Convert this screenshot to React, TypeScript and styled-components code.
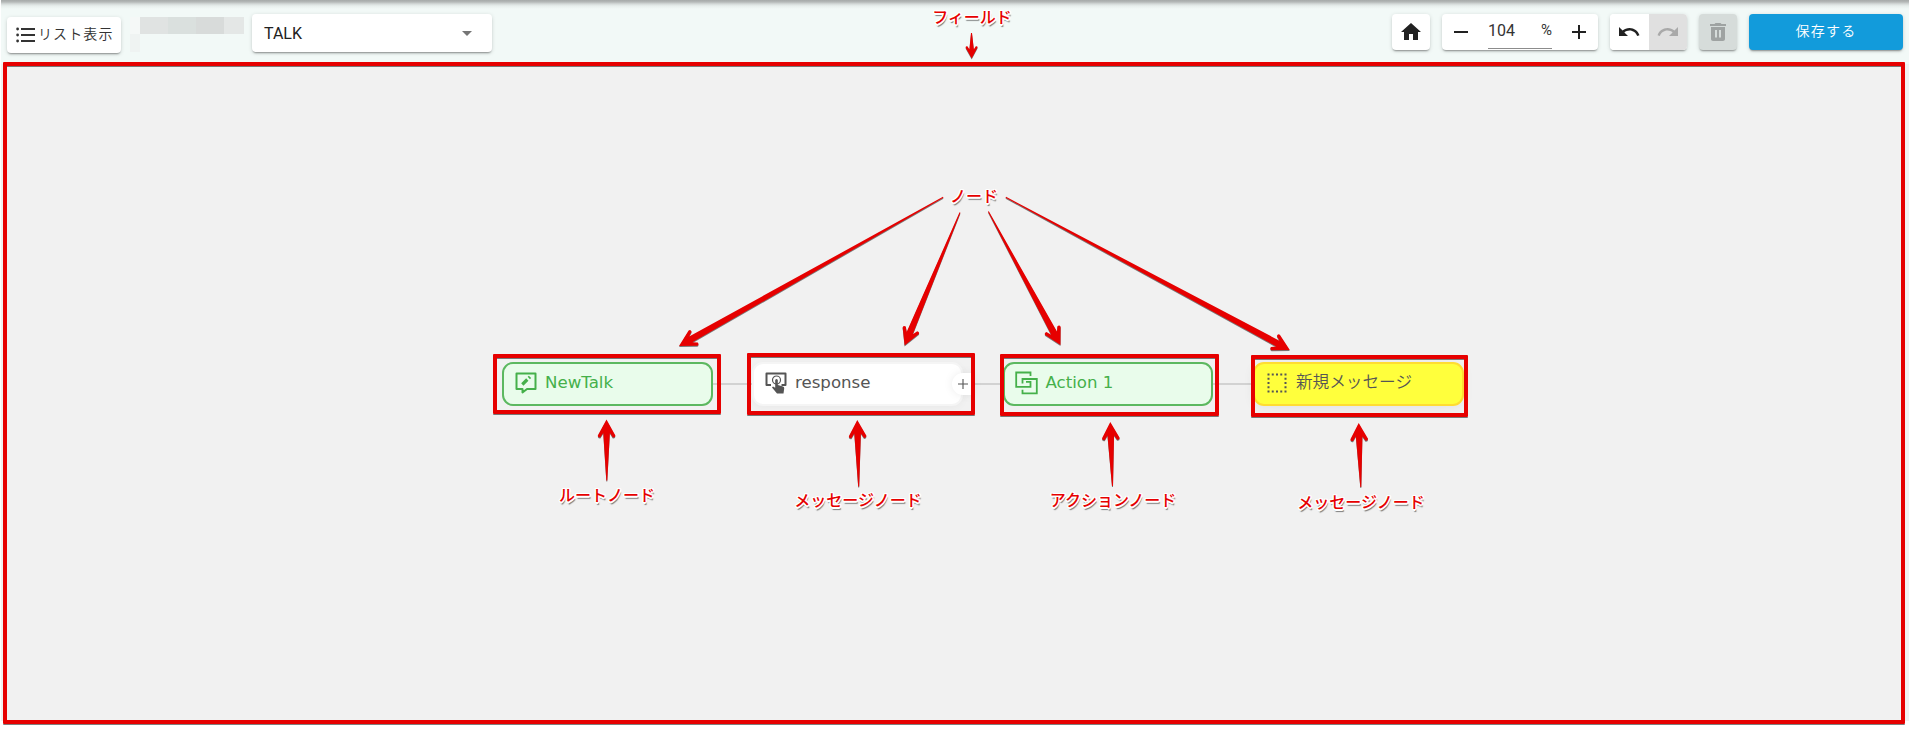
import React from "react";
import styled, { createGlobalStyle, css } from "styled-components";

const Global = createGlobalStyle`
  body { margin: 0; background: #fff; }
  * { box-sizing: border-box; }
`;

const Page = styled.div`
  position: relative;
  width: 1910px;
  height: 729px;
  padding: 0 1px;
  overflow: hidden;
  background: #fff;
  font-family: Roboto, "Noto Sans CJK JP", sans-serif;
  color: #212121;
`;

const Toolbar = styled.header`
  display: flex;
  align-items: flex-start;
  height: 64px;
  padding: 14px 6px 0;
  background: linear-gradient(#a6aaa9 0, #b5b9b8 2px, #d5dad9 4px, #e8efed 6px, #f2f9f7 9px);
`;

const raised = css`
  border-radius: 4px;
  box-shadow: 0 2px 2px -1px rgba(0, 0, 0, 0.38), 0 1px 4px rgba(0, 0, 0, 0.14);
`;

const ListButton = styled.button`
  ${raised}
  display: flex;
  align-items: center;
  width: 114px;
  height: 36px;
  margin: 3px 9px 0 0;
  padding: 0 0 0 9px;
  border: 0;
  background: #fff;
  color: #333;
  font: 350 14px Roboto, "Noto Sans CJK JP", sans-serif;
  letter-spacing: 1.1px;
  white-space: nowrap;
`;

const ListLabel = styled.span`
  margin: -5px 0 0 3px;
`;

const Mask = styled.div`
  display: grid;
  grid-template-columns: 10px 28px 28px 28px 20px;
  grid-template-rows: 17px 18px;
  margin: 3px 8px 0 0;
`;

const MaskCell = styled.i<{ $tone: string }>`
  background: ${(p) => p.$tone};
`;

const Select = styled.div`
  ${raised}
  display: flex;
  align-items: center;
  justify-content: space-between;
  width: 240px;
  height: 38px;
  padding: 0 20px 0 12px;
  background: #fff;
  font-size: 16px;
`;

const Caret = styled.span`
  border: 5px solid transparent;
  border-top-color: #757575;
  border-bottom: 0;
`;

const Actions = styled.div`
  display: flex;
  gap: 12px;
  margin-left: auto;
`;

const Group = styled.div<{ $width: number; $disabled?: boolean }>`
  ${raised}
  display: flex;
  align-items: center;
  justify-content: center;
  width: ${(p) => p.$width}px;
  height: 36px;
  overflow: hidden;
  background: ${(p) => (p.$disabled ? "#d6dcda" : "#fff")};
  color: ${(p) => (p.$disabled ? "#9fa3a2" : "#212121")};
`;

const HistoryButton = styled.span<{ $disabled?: boolean }>`
  display: flex;
  flex: 1;
  align-items: center;
  justify-content: center;
  height: 100%;
  background: ${(p) => (p.$disabled ? "#e0e0e0" : "#fff")};
  color: ${(p) => (p.$disabled ? "#a9a9a9" : "#212121")};
`;

const ZoomField = styled.div`
  display: flex;
  justify-content: space-between;
  width: 64px;
  height: 34px;
  margin: 0 15px;
  padding-top: 6px;
  border-bottom: 1px solid #8c8c8c;
  font-size: 16px;
  line-height: 19px;
  color: #333;
`;

const Unit = styled.span`
  font-size: 15px;
`;

const SaveButton = styled.button`
  ${raised}
  width: 154px;
  height: 36px;
  padding: 0 0 5px;
  border: 0;
  background: #129bdb;
  color: #fff;
  font: 350 14px Roboto, "Noto Sans CJK JP", sans-serif;
  letter-spacing: 1.2px;
`;

const Field = styled.main`
  height: 657px;
  background: #f1f1f1;
`;

const Overlay = styled.div`
  position: absolute;
  inset: 0;
`;

const Link = styled.div<{ $x: number; $w: number }>`
  position: absolute;
  left: ${(p) => p.$x}px;
  top: 383px;
  width: ${(p) => p.$w}px;
  height: 2px;
  background: #d2d2d2;
`;

type Tone = "green" | "white" | "yellow";
const tones = {
  green: css`
    background: #e9fceb;
    border-color: #5cb860;
    color: #45b04a;
  `,
  white: css`
    background: #fff;
    border-color: #f5f5f5;
    color: #555;
    box-shadow: 0 2px 8px rgba(0, 0, 0, 0.03);
  `,
  yellow: css`
    background: #ffff3c;
    border-color: #ffdc32;
    color: #555;
    box-shadow: 0 2px 12px rgba(0, 0, 0, 0.06);
  `,
};

const Node = styled.div<{ $x: number; $tone: Tone }>`
  position: absolute;
  left: ${(p) => p.$x}px;
  top: 362px;
  display: flex;
  align-items: center;
  gap: 7px;
  width: 210.5px;
  height: 43.5px;
  padding: 0 0 2px 10px;
  border: 2px solid;
  border-radius: 11px;
  font: 400 16.64px "DejaVu Sans", "Noto Sans CJK JP", sans-serif;
  white-space: nowrap;
  ${(p) => tones[p.$tone]}
`;

const NodeText = styled.span<{ $light?: boolean }>`
  margin-top: ${(p) => (p.$light ? -3 : -1)}px;
  font-weight: ${(p) => (p.$light ? 350 : 400)};
  ${(p) => p.$light && `font-family: "Noto Sans CJK JP", sans-serif;`}
`;

const AddHandle = styled.div`
  position: absolute;
  left: 952px;
  top: 373px;
  display: grid;
  place-items: center;
  width: 21px;
  height: 22px;
  border-radius: 11px 0 0 11px;
  background: #fff;
  box-shadow: 0 0 10px rgba(0, 0, 0, 0.08);
`;

const Frame = styled.div<{ $x: number; $y: number; $w: number; $h: number }>`
  position: absolute;
  left: ${(p) => p.$x}px;
  top: ${(p) => p.$y}px;
  width: ${(p) => p.$w}px;
  height: ${(p) => p.$h}px;
  border: 4px solid #e60000;
  border-radius: 1px;
  box-shadow: 0 1px 0 rgba(0, 0, 0, 0.5), inset 0 1px 0 rgba(0, 0, 0, 0.5);
`;

const Label = styled.div<{ $x: number; $y: number }>`
  position: absolute;
  left: ${(p) => p.$x}px;
  top: ${(p) => p.$y}px;
  transform: translate(-50%, -50%);
  font: 500 16px/24px "Noto Sans CJK JP", sans-serif;
  color: #e60000;
  white-space: nowrap;
  text-shadow: -1px -1px 0 #fff, 1px -1px 0 #fff, -1px 1px 0 #fff, 1px 1px 0 #fff,
    -1.5px 0 0 #fff, 1.5px 0 0 #fff, 0 1.5px 0 #fff, 0 -1.5px 0 #fff, 1px 2.5px 1px rgba(0, 0, 0, 0.5);
`;

const ArrowLayer = styled.svg`
  position: absolute;
  inset: 0;
  filter: drop-shadow(0 1px 0.5px rgba(0, 0, 0, 0.5));
`;

const Icon = ({ d, size = 24 }: { d: string; size?: number }) => (
  <svg width={size} height={size} viewBox="0 0 24 24" fill="currentColor">
    <path d={d} />
  </svg>
);

type ArrowProps = { from: [number, number]; to: [number, number]; k?: number };

/* Tapered shaft that widens from the tail up to a barbed head. */
const Arrow = ({ from, to, k = 1 }: ArrowProps) => {
  const length = Math.hypot(to[0] - from[0], to[1] - from[1]);
  const angle = (Math.atan2(to[1] - from[1], to[0] - from[0]) * 180) / Math.PI;
  const p = (x: number, y: number) => `${x * k} ${y * k}`;
  const d =
    `M0 0 L${p(-16, -8.8)} Q${p(-18.5, -8.8)} ${p(-18, -6.2)} L${p(-13.5, -3.3)} ` +
    `L${-length} -0.5 L${-length} 0.5 L${p(-13.5, 3.3)} L${p(-18, 6.2)} Q${p(-18.5, 8.8)} ${p(-16, 8.8)} Z`;
  return <path d={d} fill="#e60000" transform={`translate(${to[0]} ${to[1]}) rotate(${angle})`} />;
};

const arrows: ArrowProps[] = [
  { from: [971.5, 33], to: [971.7, 58.5], k: 0.68 },
  { from: [943.2, 197.3], to: [679, 346] },
  { from: [960, 212.5], to: [904.6, 345.5] },
  { from: [988.4, 211.5], to: [1060.5, 345] },
  { from: [1005.8, 197.3], to: [1289.8, 350] },
  { from: [606.8, 480.5], to: [606.5, 419.5] },
  { from: [858.7, 486.5], to: [857.3, 420] },
  { from: [1112.5, 486], to: [1110.3, 422] },
  { from: [1360.8, 487], to: [1358.7, 423] },
];

const frames = [
  [3, 62, 1902, 662],
  [493, 354, 228, 60],
  [747, 353, 228, 62],
  [1000, 354, 219, 62],
  [1251, 355, 217, 62],
];

const labels: [string, number, number][] = [
  ["フィールド", 972, 16],
  ["ノード", 974, 195],
  ["ルートノード", 607, 494],
  ["メッセージノード", 858, 499],
  ["アクションノード", 1113, 499],
  ["メッセージノード", 1361, 501],
];

const maskTones = ["#f5f8f7", "#e0e3e2", "#dae0de", "#d8dbda", "#e4e7e6", "#eff3f2"];

export default function App() {
  return (
    <Page>
      <Global />
      <Toolbar>
        <ListButton>
          <svg width="19" height="16" viewBox="0 0 19 16" fill="currentColor">
            <path d="M5 1h14v2H5zM5 7h14v2H5zM5 13h14v2H5z" />
            <circle cx="1.6" cy="2" r="1.4" />
            <circle cx="1.6" cy="8" r="1.4" />
            <circle cx="1.6" cy="14" r="1.4" />
          </svg>
          <ListLabel>リスト表示</ListLabel>
        </ListButton>
        <Mask>
          {maskTones.map((tone, i) => (
            <MaskCell key={i} $tone={tone} />
          ))}
        </Mask>
        <Select>
          TALK
          <Caret />
        </Select>
        <Actions>
          <Group $width={38}>
            <Icon d="M10 20v-6h4v6h5v-8h3L12 3 2 12h3v8z" />
          </Group>
          <Group $width={156}>
            <Icon d="M19 13H5v-2h14z" />
            <ZoomField>
              <span>104</span>
              <Unit>%</Unit>
            </ZoomField>
            <Icon d="M19 13h-6v6h-2v-6H5v-2h6V5h2v6h6z" />
          </Group>
          <Group $width={77}>
            <HistoryButton>
              <Icon d="M12.5 8c-2.65 0-5.05.99-6.9 2.6L2 7v9h9l-3.62-3.62c1.39-1.16 3.16-1.88 5.12-1.88 3.54 0 6.55 2.31 7.6 5.5l2.37-.78C21.08 11.03 17.15 8 12.5 8z" />
            </HistoryButton>
            <HistoryButton $disabled>
              <Icon d="M18.4 10.6C16.55 8.99 14.15 8 11.5 8c-4.65 0-8.58 3.03-9.96 7.22L3.9 16c1.05-3.19 4.05-5.5 7.6-5.5 1.95 0 3.73.72 5.12 1.88L13 16h9V7z" />
            </HistoryButton>
          </Group>
          <Group $width={38} $disabled>
            <svg width="24" height="24" viewBox="0 0 24 24" fill="currentColor">
              <path
                fillRule="evenodd"
                d="M5 7v12c0 1.100.9 2 2 2h10c1.100 0 2-.9 2-2V7zM9 10h2v7.500H9zM13 10h2v7.500h-2zM20 4h-4.500l-1-1h-5l-1 1H4v2h16z"
              />
            </svg>
          </Group>
          <SaveButton>保存する</SaveButton>
        </Actions>
      </Toolbar>
      <Field />
      <Overlay>
        <Link $x={712} $w={42} />
        <Link $x={962} $w={42} />
        <Link $x={1213} $w={42} />
        <Node $x={502} $tone="green">
          <svg width="24" height="24" viewBox="0 0 24 24" fill="none" stroke="currentColor" strokeWidth="2">
            <path d="M2.500 2.500h19v15.500h-8.500l-4.500 3.500v-3.500h-6z" strokeLinejoin="round" />
            <path d="M8.300 13.500l5-5M14.800 7l1.200-1.200" strokeWidth="3.200" />
          </svg>
          <NodeText>NewTalk</NodeText>
        </Node>
        <Node $x={752} $tone="white">
          <svg width="24" height="24" viewBox="0 0 24 24" fill="none" stroke="currentColor" strokeWidth="2">
            <path d="M7 14H2.500V2.500h19V14h-4" strokeLinejoin="round" />
            <circle cx="12.500" cy="9" r="4" strokeWidth="1.2" />
            <path d="M11.200 9q1.300-1.800 2.600 0v5l5.200 1.500q1.500.5 1.200 2L19.500 22.500h-6.500l-5-6 1-1 2.200 1.200z" fill="currentColor" stroke="none" />
          </svg>
          <NodeText>response</NodeText>
        </Node>
        <Node $x={1002.5} $tone="green">
          <svg width="24" height="24" viewBox="0 0 24 24" fill="none" stroke="currentColor" strokeWidth="1.8">
            <path d="M15.500 5V1.500H1.200v14.300h14.300v-5h-4.500M7.500 12.500V8h14.300v14.300H7.500v-3.500" />
          </svg>
          <NodeText>Action 1</NodeText>
        </Node>
        <Node $x={1253} $tone="yellow">
          <svg width="24" height="24" viewBox="0 0 24 24" fill="none" stroke="currentColor" strokeWidth="2">
            <path d="M2.500 3.500h19M2.500 20.500h19M3.500 2.500v19M20.500 2.500v19" strokeDasharray="2 2.250" />
          </svg>
          <NodeText $light>新規メッセージ</NodeText>
        </Node>
        <AddHandle>
          <svg width="10" height="10" viewBox="0 0 10 10" stroke="#555" strokeWidth="1.100">
            <path d="M0 5h10M5 0v10" />
          </svg>
        </AddHandle>
        {frames.map(([x, y, w, h]) => (
          <Frame key={x} $x={x} $y={y} $w={w} $h={h} />
        ))}
        <ArrowLayer width="1910" height="729">
          {arrows.map((a, i) => (
            <Arrow key={i} {...a} />
          ))}
        </ArrowLayer>
        {labels.map(([text, x, y]) => (
          <Label key={x} $x={x} $y={y}>
            {text}
          </Label>
        ))}
      </Overlay>
    </Page>
  );
}
